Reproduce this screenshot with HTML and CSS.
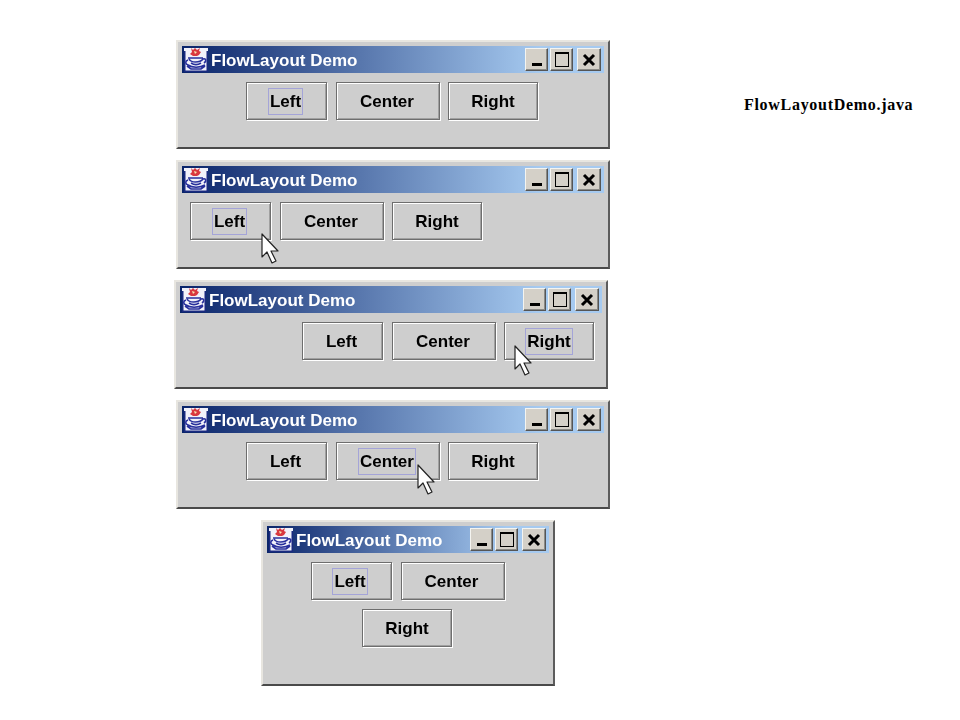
FILE: index.html
```html
<!DOCTYPE html>
<html lang="en">
<head>
    <meta charset="UTF-8">
    <title>FlowLayout Demo</title>
    <link rel="stylesheet" href="styles.css">
</head>
<body>
    <svg class="defs" width="0" height="0">
        <symbol id="cup" viewBox="0 0 24 24">
            <rect width="24" height="24" fill="#f2f2fa"/>
            <path d="M0 3h1.5v21H0zM22.5 3H24v21h-1.5zM0 22.5h24V24H0z" fill="#1a2a80"/>
            <path d="M7 0l2 2 2-2 2 2 3-2-1 3 2 1-2 3-2 1H9L6 6l2-2z" fill="#d8383f"/>
            <path d="M10 3l3 1-2 2z" fill="#f6e6b0"/>
            <path d="M4 10h15M5 11c2 4 11 4 14 0M19 11c3-1 4 2 1 4M4 12c-3 1-3 4 0 5 4 3 12 3 17 0M7 15c3 2 7 2 10 0M3 18l4 3h10l4-3" fill="none" stroke="#28309c" stroke-width="1.6"/>
        </symbol>
        <symbol id="arrow" viewBox="0 0 18 31">
            <path d="M1 1v23l5-5 5 11 4-2-5-10h7z" fill="#fff" stroke="#222" stroke-width="1.2" stroke-linejoin="round"/>
        </symbol>
        <symbol id="close-x" viewBox="0 0 14 14">
            <path d="M2 2l10 10M12 2L2 12" fill="none" stroke="#000" stroke-width="3"/>
        </symbol>
    </svg>

    <!-- centered -->
    <div class="window win-1">
        <div class="titlebar">
            <svg class="title-icon"><use href="#cup"/></svg>
            <span class="title-text">FlowLayout Demo</span>
            <div class="controls">
                <span class="ctl ctl-min"><i></i></span>
                <span class="ctl ctl-max"><i></i></span>
                <span class="ctl ctl-close"><svg class="close-icon"><use href="#close-x"/></svg></span>
            </div>
        </div>
        <div class="content">
            <div class="btn btn-left"><span class="focus">Left</span></div>
            <div class="btn btn-center"><span>Center</span></div>
            <div class="btn btn-right"><span>Right</span></div>
        </div>
    </div>

    <!-- left aligned -->
    <div class="window win-2">
        <div class="titlebar">
            <svg class="title-icon"><use href="#cup"/></svg>
            <span class="title-text">FlowLayout Demo</span>
            <div class="controls">
                <span class="ctl ctl-min"><i></i></span>
                <span class="ctl ctl-max"><i></i></span>
                <span class="ctl ctl-close"><svg class="close-icon"><use href="#close-x"/></svg></span>
            </div>
        </div>
        <div class="content">
            <div class="btn btn-left"><span class="focus">Left</span></div>
            <div class="btn btn-center"><span>Center</span></div>
            <div class="btn btn-right"><span>Right</span></div>
        </div>
    </div>
    <svg class="cursor cur-2"><use href="#arrow"/></svg>

    <!-- right aligned -->
    <div class="window win-3">
        <div class="titlebar">
            <svg class="title-icon"><use href="#cup"/></svg>
            <span class="title-text">FlowLayout Demo</span>
            <div class="controls">
                <span class="ctl ctl-min"><i></i></span>
                <span class="ctl ctl-max"><i></i></span>
                <span class="ctl ctl-close"><svg class="close-icon"><use href="#close-x"/></svg></span>
            </div>
        </div>
        <div class="content">
            <div class="btn btn-left"><span>Left</span></div>
            <div class="btn btn-center"><span>Center</span></div>
            <div class="btn btn-right"><span class="focus">Right</span></div>
        </div>
    </div>
    <svg class="cursor cur-3"><use href="#arrow"/></svg>

    <!-- centered again -->
    <div class="window win-4">
        <div class="titlebar">
            <svg class="title-icon"><use href="#cup"/></svg>
            <span class="title-text">FlowLayout Demo</span>
            <div class="controls">
                <span class="ctl ctl-min"><i></i></span>
                <span class="ctl ctl-max"><i></i></span>
                <span class="ctl ctl-close"><svg class="close-icon"><use href="#close-x"/></svg></span>
            </div>
        </div>
        <div class="content">
            <div class="btn btn-left"><span>Left</span></div>
            <div class="btn btn-center"><span class="focus">Center</span></div>
            <div class="btn btn-right"><span>Right</span></div>
        </div>
    </div>
    <svg class="cursor cur-4"><use href="#arrow"/></svg>

    <!-- narrow, wraps -->
    <div class="window win-5">
        <div class="titlebar">
            <svg class="title-icon"><use href="#cup"/></svg>
            <span class="title-text">FlowLayout Demo</span>
            <div class="controls">
                <span class="ctl ctl-min"><i></i></span>
                <span class="ctl ctl-max"><i></i></span>
                <span class="ctl ctl-close"><svg class="close-icon"><use href="#close-x"/></svg></span>
            </div>
        </div>
        <div class="content">
            <div class="btn btn-left"><span class="focus">Left</span></div>
            <div class="btn btn-center"><span>Center</span></div>
            <div class="btn btn-right"><span>Right</span></div>
        </div>
    </div>

    <div class="file-name">FlowLayoutDemo.java</div>
</body>
</html>
```
FILE: styles.css
```css
body {
    margin: 0;
    background-color: #fff;
    font-family: "Liberation Sans", Arial, sans-serif;
}
.defs {
    position: absolute;
}

/* Windows */
.window {
    position: absolute;
    box-sizing: border-box;
    width: 434px;
    height: 109px;
    padding: 4px;
    background-color: #cecece;
    border: 2px solid;
    border-color: #e8e6e0 #5c5c5c #4a4a4a #e8e6e0;
    filter: blur(0.4px);
}
.win-1 { left: 176px; top: 40px; }
.win-2 { left: 176px; top: 160px; }
.win-3 { left: 174px; top: 280px; }
.win-4 { left: 176px; top: 400px; }
.win-5 { left: 261px; top: 520px; width: 294px; height: 166px; }

/* Title bar */
.titlebar {
    display: flex;
    align-items: center;
    height: 27px;
    padding: 0 3px 0 2px;
    background: linear-gradient(to right, #0a246a, #a6caf0 85%);
}
.title-icon {
    width: 24px;
    height: 24px;
    flex-shrink: 0;
}
.title-text {
    margin-left: 3px;
    padding-top: 2px;
    color: #fff;
    font-size: 17px;
    font-weight: bold;
    white-space: nowrap;
}
.controls {
    display: flex;
    margin-left: auto;
}
.ctl {
    box-sizing: border-box;
    display: flex;
    align-items: center;
    justify-content: center;
    width: 23px;
    height: 23px;
    margin-left: 2px;
    background-color: #d4d0c8;
    border: 1px solid;
    border-color: #f4f4f0 #555 #555 #f4f4f0;
    box-shadow: inset -1px -1px 0 #8a8a86;
}
.ctl-close {
    width: 24px;
    margin-left: 4px;
}
.close-icon {
    width: 14px;
    height: 14px;
}
.ctl-min i {
    width: 10px;
    height: 3px;
    margin-top: 10px;
    background-color: #000;
}
.ctl-max i {
    box-sizing: border-box;
    width: 14px;
    height: 15px;
    border: 1px solid #000;
    border-top-width: 2px;
}

/* Button rows */
.content {
    display: flex;
    flex-wrap: wrap;
    justify-content: center;
    gap: 9px;
    padding: 9px 10px 0 8px;
}
.win-2 .content { justify-content: flex-start; }
.win-3 .content { justify-content: flex-end; padding-right: 8px; }

.btn {
    box-sizing: border-box;
    display: flex;
    align-items: center;
    justify-content: center;
    height: 38px;
    padding-right: 2px;
    border: 1px solid #6e6e6e;
    box-shadow: 1px 1px 0 #fff, inset 1px 1px 0 #fff, inset -1px -1px 0 #a0a0a0;
    color: #000;
    font-size: 17px;
    font-weight: bold;
}
.btn-left { width: 81px; }
.btn-center { width: 104px; margin-right: -1px; }
.btn-right { width: 90px; padding-right: 0; }
.btn span {
    box-sizing: border-box;
    height: 27px;
    padding: 0 1px;
    border: 1px solid transparent;
    line-height: 26px;
}
.btn .focus {
    border-color: #a4a4d8;
}

/* Mouse pointers */
.cursor {
    position: absolute;
    width: 18px;
    height: 31px;
    filter: blur(0.3px);
}
.cur-2 { left: 261px; top: 233px; }
.cur-3 { left: 514px; top: 345px; }
.cur-4 { left: 417px; top: 464px; }

.file-name {
    position: absolute;
    left: 744px;
    top: 96px;
    font-family: "Liberation Serif", "Times New Roman", serif;
    font-size: 16px;
    font-weight: bold;
    letter-spacing: 0.7px;
    color: #000;
}
```
